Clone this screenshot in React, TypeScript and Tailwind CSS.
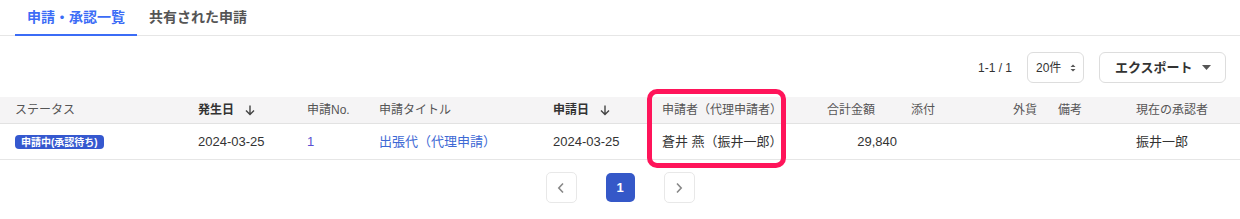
import React from 'react';

const font = { fontFamily: '"Liberation Sans", "Noto Sans CJK JP", sans-serif' };

const ArrowDown = () => (
  <svg width="12" height="12" viewBox="0 0 12 12" className="ml-[10px] text-[#444]">
    <path d="M6 1.5v8.5M2 6.5l4 4 4-4" fill="none" stroke="currentColor" strokeWidth="1.4" />
  </svg>
);

export default function App() {
  return (
    <div className="relative w-[1240px] h-[219px] bg-white text-[#333]" style={font}>
      {/* tabs */}
      <div className="flex h-[36px] border-b border-[#e6e6e6] px-[15px]">
        <div className="flex items-center w-[122px] justify-center border-b-2 border-[#3b6cf6] text-[14px] font-bold text-[#3b6cf6] -mb-[1px]">
          申請・承認一覧
        </div>
        <div className="flex items-center pl-[12px] text-[14px] font-bold text-[#555]">共有された申請</div>
      </div>

      {/* toolbar */}
      <div className="flex items-center justify-end h-[47px] pt-[16px] pr-[14px]">
        <span className="text-[12px] text-[#333] mr-[15px]">1-1 / 1</span>
        <div className="flex items-center justify-between w-[57px] h-[31px] border border-[#ddd] rounded-[6px] pl-[8px] pr-[7px] text-[12px] mr-[15px]">
          <span>20件</span>
          <svg width="6" height="10" viewBox="0 0 6 10">
            <path d="M0.5 4L3 1.5 5.5 4zM0.5 6L3 8.5 5.5 6z" fill="#555" />
          </svg>
        </div>
        <div className="flex items-center justify-between w-[127px] h-[31px] border border-[#ddd] rounded-[6px] pl-[15px] pr-[14px] text-[13px] font-bold text-[#333]">
          <span>エクスポート</span>
          <svg width="9" height="5" viewBox="0 0 9 5">
            <path d="M0 0h9L4.5 5z" fill="#555" />
          </svg>
        </div>
      </div>

      {/* table */}
      <div className="mt-[14px]">
        <div className="flex items-center h-[27px] bg-[#f5f4f5] border-b border-[#e2e2e2] pl-[15px] text-[12px] text-[#555]">
          <div className="w-[183px]">ステータス</div>
          <div className="w-[109px] flex items-center font-bold text-[#333]">発生日<ArrowDown /></div>
          <div className="w-[72px]">申請No.</div>
          <div className="w-[174px]">申請タイトル</div>
          <div className="w-[109px] flex items-center font-bold text-[#333]">申請日<ArrowDown /></div>
          <div className="w-[165px]">申請者（代理申請者）</div>
          <div className="w-[84px]">合計金額</div>
          <div className="w-[102px]">添付</div>
          <div className="w-[45px]">外貨</div>
          <div className="w-[78px]">備考</div>
          <div>現在の承認者</div>
        </div>
        <div className="flex items-center h-[36px] border-b border-[#e6e6e6] pl-[15px] text-[13px] text-[#333]">
          <div className="w-[183px]">
            <span className="inline-flex items-center h-[14px] px-[6px] rounded-[4px] bg-[#3558cf] text-white text-[10px] font-bold">
              申請中(承認待ち)
            </span>
          </div>
          <div className="w-[109px]">2024-03-25</div>
          <div className="w-[72px] text-[#5b4fd0]">1</div>
          <div className="w-[174px] text-[#3d68d4]">出張代（代理申請）</div>
          <div className="w-[109px]">2024-03-25</div>
          <div className="w-[165px]">蒼井 燕（振井一郎）</div>
          <div className="w-[70px] text-right">29,840</div>
          <div className="w-[14px]" />
          <div className="w-[102px]" />
          <div className="w-[45px]" />
          <div className="w-[78px]" />
          <div>振井一郎</div>
        </div>
      </div>

      {/* pagination */}
      <div className="flex items-center justify-center gap-[29px] mt-[12px]">
        <div className="flex items-center justify-center w-[31px] h-[31px] border border-[#e8e8e8] rounded-[5px]">
          <svg width="8" height="12" viewBox="0 0 8 12">
            <path d="M6 1.5L1.8 6 6 10.5" fill="none" stroke="#888" strokeWidth="1.6" />
          </svg>
        </div>
        <div className="flex items-center justify-center w-[29px] h-[29px] rounded-[5px] bg-[#3558c8] text-white text-[13px] font-bold">
          1
        </div>
        <div className="flex items-center justify-center w-[31px] h-[31px] border border-[#e8e8e8] rounded-[5px]">
          <svg width="8" height="12" viewBox="0 0 8 12">
            <path d="M2 1.5L6.2 6 2 10.5" fill="none" stroke="#888" strokeWidth="1.6" />
          </svg>
        </div>
      </div>

      {/* highlight annotation */}
      <div className="absolute left-[647px] top-[89px] w-[139px] h-[79px] border-[5px] border-[#ff145a] rounded-[10px] pointer-events-none" />
    </div>
  );
}
